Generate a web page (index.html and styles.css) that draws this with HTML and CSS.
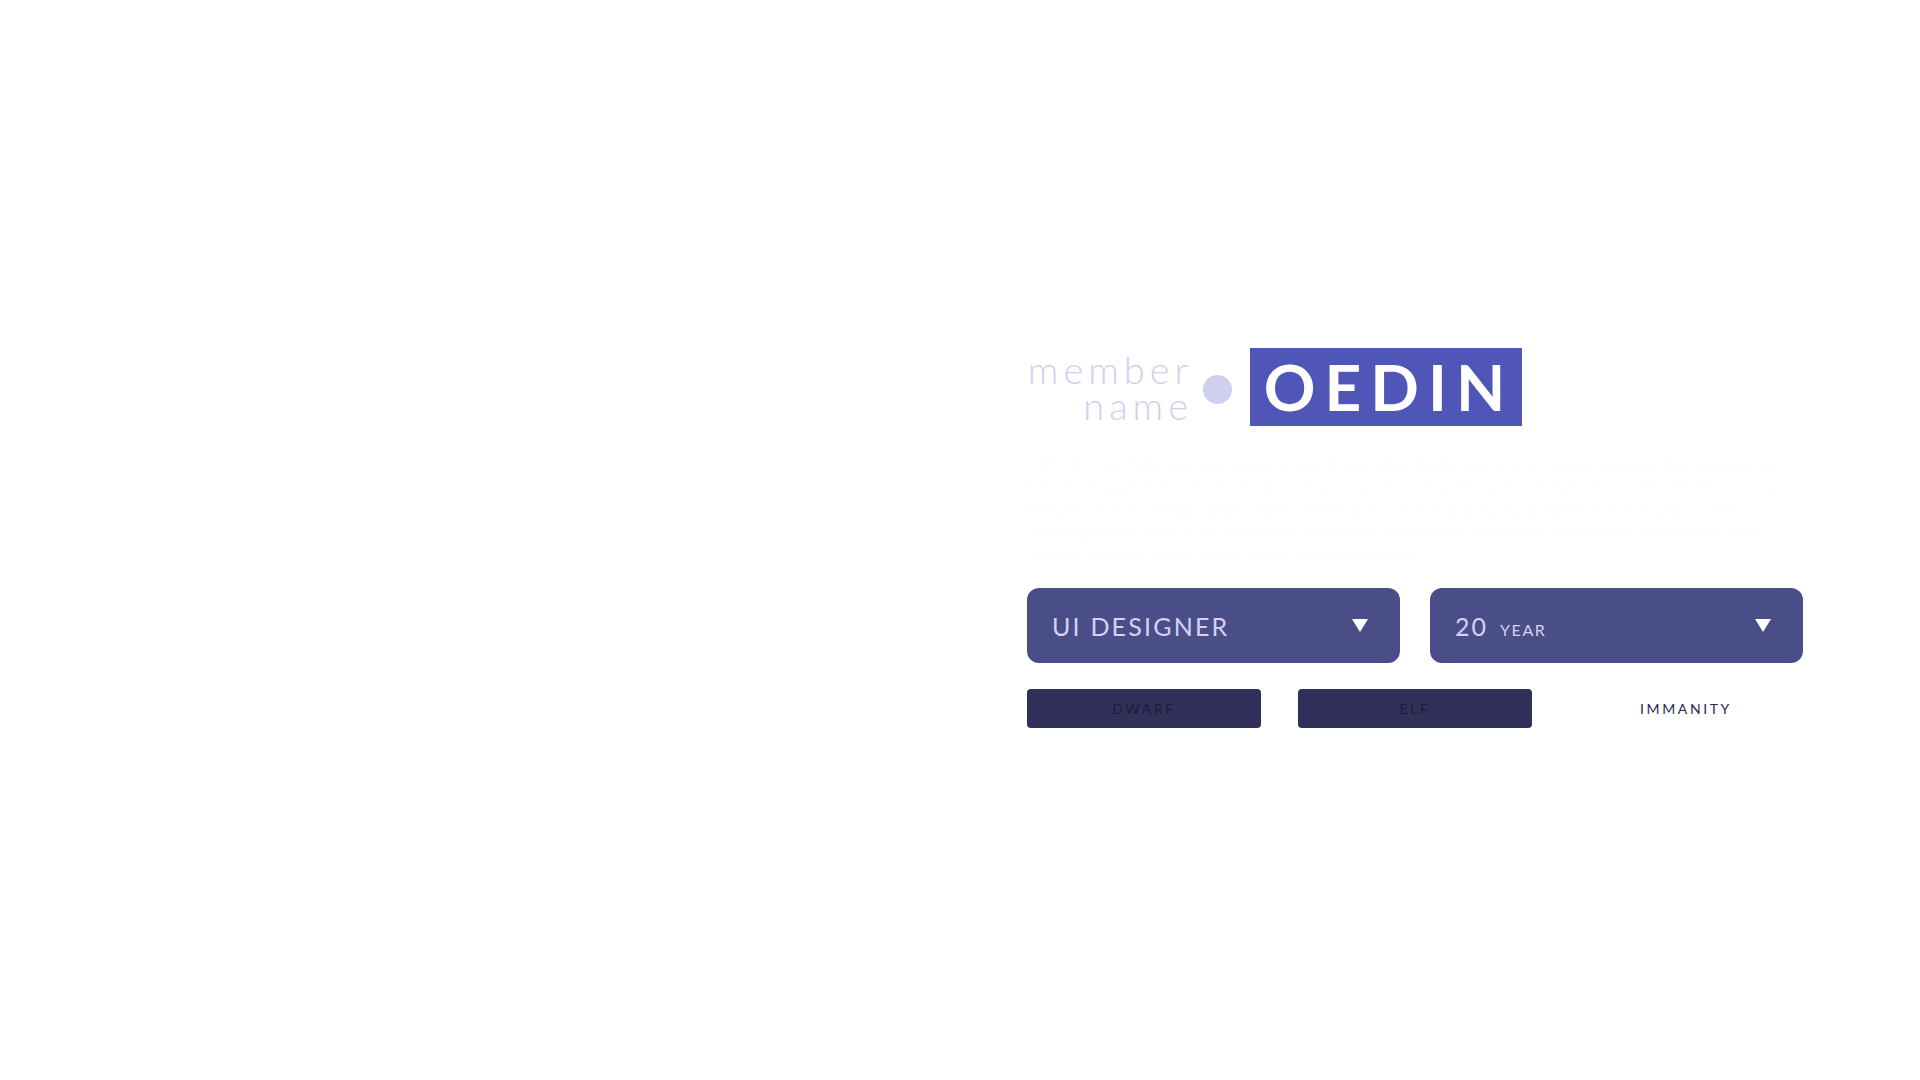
FILE: index.html
```html
<!DOCTYPE html>
<html lang="id">
<head>
<meta charset="utf-8">
<title>OEDIN</title>
<link rel="stylesheet" href="styles.css">
</head>
<body>
<main class="page">
  <section class="card">
    <header class="title">
      <div class="label">member<br>name</div>
      <span class="dot"></span>
      <h1 class="name">OEDIN</h1>
    </header>
    <p class="bio">OEDIN memiliki mimpi besar yang tinggi dari pada siapapun. Tidak seperti Kwon yang ter-<br>lalu berlagak hero, dia bekerja dengan santai tetapi tepat, setelah dia melihat Kwon yang<br>bekerja keras hingga lelah, ia memberikan perhatiannya agar tidak memaksakan diri.<br>Disamping itu dia juga memiliki beberapa kemiripan dengan Kwon seperti memiliki pan-<br>dangan untuk dunia yang baru di masa depan.</p>
    <div class="selects">
      <div class="select"><span class="val">UI DESIGNER</span><span class="caret"></span></div>
      <div class="select"><span class="val"><span class="num">20</span><span class="unit">YEAR</span></span><span class="caret"></span></div>
    </div>
    <div class="races">
      <button class="race on">DWARF</button>
      <button class="race on">ELF</button>
      <button class="race">IMMANITY</button>
    </div>
  </section>
</main>
</body>
</html>
```

FILE: styles.css
```css
* { box-sizing: border-box; }
html, body { margin: 0; background: #ffffff; }
body { font-family: Lato, "Noto Sans", sans-serif; }

.page {
  padding: 348px 0 0 1027px;
  min-height: 1080px;
}
.card { width: 776px; }

.title {
  display: flex;
  align-items: center;
  height: 78px;
}
.label {
  width: 166px;
  text-align: right;
  font-size: 38px;
  line-height: 36px;
  font-weight: 300;
  letter-spacing: 5px;
  margin-right: -5px;
  color: #d2cff2;
}
.dot {
  width: 29px;
  height: 29px;
  border-radius: 50%;
  background: #d1cff0;
  margin-left: 15px;
  margin-top: 4px;
}
.name {
  margin: 0 0 0 18px;
  width: 272px;
  height: 78px;
  background: #5055b8;
  color: #ffffff;
  font-size: 64px;
  font-weight: 700;
  line-height: 78px;
  letter-spacing: 9px;
  text-align: center;
  padding-left: 6px;
}

.bio {
  margin: 27px 0 0 3px;
  font-size: 19px;
  line-height: 22.3px;
  letter-spacing: 0.2px;
  color: #fefefe;
  white-space: nowrap;
}

.selects {
  display: flex;
  gap: 30px;
  margin-top: 24px;
}
.select {
  flex: 0 0 373px;
  height: 75px;
  border-radius: 12px;
  background: #4a4e88;
  display: flex;
  align-items: center;
  justify-content: space-between;
  padding: 0 32px 0 25px;
  color: #d4d1f3;
}
.val {
  font-size: 25px;
  letter-spacing: 2.2px;
  display: flex;
  align-items: baseline;
}
.num { letter-spacing: 2px; }
.unit {
  font-size: 16px;
  letter-spacing: 1.6px;
  margin-left: 12px;
}
.caret {
  width: 0;
  height: 0;
  border-left: 8px solid transparent;
  border-right: 8px solid transparent;
  border-top: 13px solid #ffffff;
}

.races {
  display: flex;
  gap: 37px;
  margin-top: 26px;
}
.race {
  width: 234px;
  height: 39px;
  border: 0;
  border-radius: 4px;
  background: transparent;
  font-family: Lato, "Noto Sans", sans-serif;
  font-size: 14px;
  letter-spacing: 2.6px;
  color: #2b2b50;
  padding: 0;
}
.race.on {
  background: #30305a;
  color: #1c1c36;
}
```
